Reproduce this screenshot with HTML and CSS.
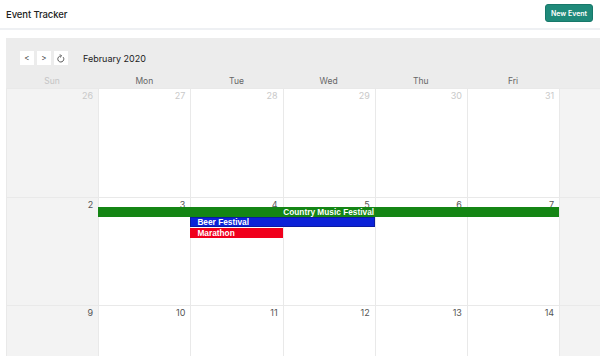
FILE: index.html
```html
<!DOCTYPE html>
<html>
<head>
<meta charset="utf-8">
<link rel="stylesheet" href="styles.css">
</head>
<body>
<div class="page">
  <header class="topbar">
    <div class="title">Event Tracker</div>
    <button class="new-btn">New Event</button>
  </header>
  <section class="calendar">
    <div class="toolbar">
      <button class="nav">&lt;</button>
      <button class="nav">&gt;</button>
      <button class="nav"><svg width="8" height="9" viewBox="0 0 8 9"><path d="M6.2 3.2 A3 3 0 1 1 3.6 2" fill="none" stroke="#444" stroke-width="0.9"/><path d="M3 0.4 L4.6 2 L3 3.4" fill="none" stroke="#444" stroke-width="0.9"/></svg></button>
      <span class="month">February 2020</span>
    </div>
    <div class="dow">
      <div class="weekend-label">Sun</div><div>Mon</div><div>Tue</div><div>Wed</div><div>Thu</div><div>Fri</div><div class="weekend-label">Sat</div>
    </div>
    <div class="week">
      <div class="cell weekend c1"></div><div class="cell c2"></div><div class="cell c3"></div><div class="cell c4"></div><div class="cell c5"></div><div class="cell c6"></div><div class="cell weekend c7"></div>
      <div class="num other c1">26</div><div class="num other c2">27</div><div class="num other c3">28</div><div class="num other c4">29</div><div class="num other c5">30</div><div class="num other c6">31</div><div class="num c7">1</div>
    </div>
    <div class="week">
      <div class="cell weekend c1"></div><div class="cell c2"></div><div class="cell c3"></div><div class="cell c4"></div><div class="cell c5"></div><div class="cell c6"></div><div class="cell weekend c7"></div>
      <div class="num c1">2</div><div class="num c2">3</div><div class="num c3">4</div><div class="num c4">5</div><div class="num c5">6</div><div class="num c6">7</div><div class="num c7">8</div>
      <div class="event green e-row1 span-country">Country Music Festival</div>
      <div class="event blue e-row2 span-beer">Beer Festival</div>
      <div class="event red e-row3 span-marathon">Marathon</div>
    </div>
    <div class="week">
      <div class="cell weekend c1"></div><div class="cell c2"></div><div class="cell c3"></div><div class="cell c4"></div><div class="cell c5"></div><div class="cell c6"></div><div class="cell weekend c7"></div>
      <div class="num c1">9</div><div class="num c2">10</div><div class="num c3">11</div><div class="num c4">12</div><div class="num c5">13</div><div class="num c6">14</div><div class="num c7">15</div>
    </div>
  </section>
</div>
</body>
</html>
```
FILE: styles.css
```css
* { box-sizing: border-box; }
html, body { margin: 0; padding: 0; overflow: hidden; background: #fff; }
body { font-family: Inter, "Noto Sans", sans-serif; color: #333; }
.page { width: 600px; height: 356px; overflow: hidden; }

.topbar {
  height: 30px;
  display: flex;
  align-items: center;
  justify-content: space-between;
  padding: 0 7px 0 6px;
  border-bottom: 2px solid #eef0f3;
}
.title { font-size: 9.5px; font-weight: 500; color: #222; letter-spacing: -0.1px; }
.new-btn {
  background: #1f8a7a;
  color: #fff;
  border: 1px solid #17786a;
  border-radius: 3px;
  font-family: Inter, sans-serif;
  font-size: 7px;
  font-weight: 600;
  width: 48px;
  height: 18px;
  padding: 0;
  margin-top: -2px;
}

.calendar {
  margin: 8px 0 0 6px;
  width: 660px;
  background: #ececec;
}
.toolbar {
  height: 37px;
  display: flex;
  align-items: center;
  gap: 3px;
  padding: 3px 0 0 14px;
}
.nav {
  width: 14px;
  height: 14px;
  padding: 0;
  border: none;
  background: #fff;
  font-family: Inter, sans-serif;
  font-size: 8px;
  color: #333;
  display: flex;
  align-items: center;
  justify-content: center;
}
.month { margin-left: 12px; font-size: 9px; color: #222; }

.dow {
  display: grid;
  grid-template-columns: repeat(6, 92.2px) 106px;
  height: 13px;
  font-size: 8.5px;
  color: #666;
}
.dow div { text-align: center; line-height: 13px; }
.dow .weekend-label { color: #c4c4c4; }

.week {
  display: grid;
  grid-template-columns: repeat(6, 92.2px) 106px;
  grid-template-rows: 10px 10.5px 10.5px 10px 1fr;
  height: 108.5px;
}
.cell {
  grid-row: 1 / -1;
  background: #fff;
  border-top: 1px solid #e9e9e9;
  border-left: 1px solid #e9e9e9;
}
.cell.weekend { background: #f3f3f3; }
.c1 { grid-column: 1; } .c2 { grid-column: 2; } .c3 { grid-column: 3; } .c4 { grid-column: 4; }
.c5 { grid-column: 5; } .c6 { grid-column: 6; } .c7 { grid-column: 7; }

.num {
  grid-row: 1;
  text-align: right;
  padding-right: 5px;
  font-size: 9px;
  line-height: 12px;
  margin-top: 2px;
  color: #555;
  font-family: Inter, sans-serif;
}
.num.other { color: #c9c9c9; }

.event {
  font-family: "Liberation Sans", Arial, sans-serif;
  font-weight: 700;
  font-size: 8.3px;
  color: #fff;
  height: 10px;
  line-height: 10px;
  z-index: 1;
  white-space: nowrap;
  overflow: hidden;
}
.e-row1 { grid-row: 2; }
.e-row2 { grid-row: 3; }
.e-row3 { grid-row: 4; }
.green { background: #148514; text-align: center; }
.blue { background: #0b22d8; border: 1px solid #0a1aa0; line-height: 8px; padding-left: 6px; }
.red { background: #f0001c; padding-left: 7px; }
.span-country { grid-column: 2 / 7; }
.span-beer { grid-column: 3 / 5; }
.span-marathon { grid-column: 3 / 4; }
```
